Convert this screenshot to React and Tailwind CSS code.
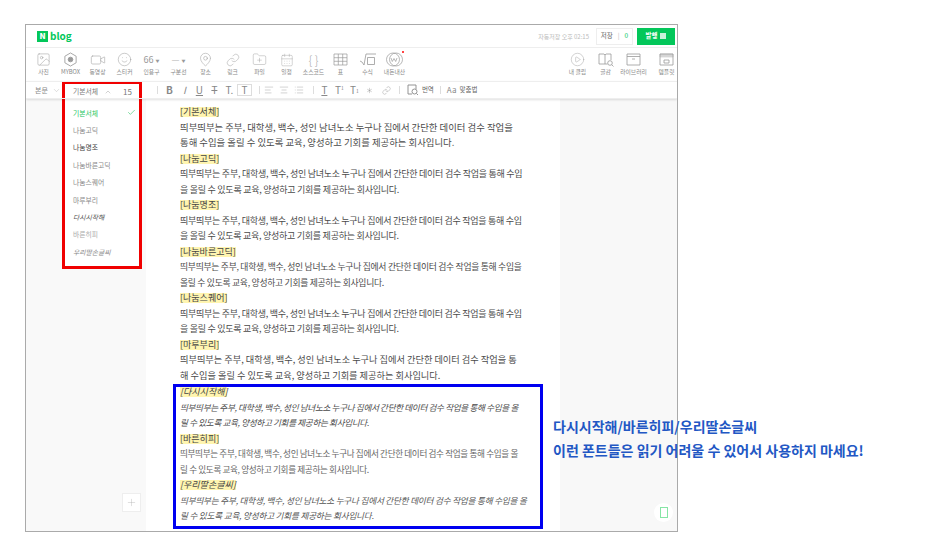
import {
  AlignCenter,
  AlignLeft,
  Asterisk,
  CalendarDays,
  Check,
  ChevronDown,
  ChevronUp,
  CirclePlay,
  FolderPlus,
  Image,
  Link,
  List,
  MapPin,
  Plus,
  Smile,
  Video,
} from "lucide-react";

const sans = "font-['Noto_Sans_CJK_KR','Noto_Sans',sans-serif]";

const Mybox = () => (
  <svg width="15" height="15" viewBox="0 0 16 16" fill="none" stroke="currentColor" strokeWidth="0.9">
    <path d="M8 1l6 3.500v7L8 15l-6-3.500v-7z" />
    <circle cx="8" cy="8" r="2.500" fill="currentColor" />
  </svg>
);

const TableIcon = () => (
  <svg width="15" height="13" viewBox="0 0 15 13" fill="none" stroke="currentColor" strokeWidth="0.7">
    <path d="M1 1h13v11H1zM1 4.700h13M1 8.300h13M5.300 1v11M9.700 1v11" />
  </svg>
);

const Formula = () => (
  <svg width="17" height="13" viewBox="0 0 17 13" fill="none" stroke="currentColor" strokeWidth="0.8">
    <path d="M1 8l2 1 2 3 2-11h10M8.500 4.500h7v7h-7z" />
  </svg>
);

const Review = () => (
  <svg width="19" height="15" viewBox="0 0 19 15" fill="none" stroke="currentColor" strokeWidth="0.7">
    <circle cx="8" cy="7.500" r="6.500" />
    <circle cx="11" cy="7.500" r="6.500" />
    <path d="M6 6l1.300 3.500L9 6.500l1.700 3L12 6" />
  </svg>
);

const BookSearch = () => (
  <svg width="16" height="14" viewBox="0 0 16 14" fill="none" stroke="currentColor" strokeWidth="0.8">
    <path d="M7 2L6 1H1v10h6zM7 2l1-1h5v6M7 11h2.500" />
    <circle cx="12" cy="10" r="2.300" />
    <path d="M13.700 11.700L15.500 13.500" />
  </svg>
);

const LibraryIcon = () => (
  <svg width="15" height="13" viewBox="0 0 15 13" fill="none" stroke="currentColor" strokeWidth="0.8">
    <path d="M1 1h13v11H1zM1 3.500h13M6 6h3" />
  </svg>
);

const TemplateIcon = () => (
  <svg width="15" height="13" viewBox="0 0 15 13" fill="none" stroke="currentColor" strokeWidth="0.8">
    <path d="M1 1h13v11H1z" />
    <path d="M1 1h13v3H1z" fill="currentColor" opacity="0.4" />
    <path d="M5 7h5v3H5z" />
  </svg>
);

const Translate = () => (
  <svg width="12" height="12" viewBox="0 0 12 12" fill="none" stroke="currentColor" strokeWidth="0.9">
    <path d="M1 1h8v4M1 1v9h4" />
    <circle cx="7.500" cy="7.500" r="2.500" />
    <path d="M9.500 9.500L11 11" />
  </svg>
);

const leftTools = [
  { label: "사진", icon: <Image size={15} strokeWidth={0.8} /> },
  { label: "MYBOX", icon: <Mybox /> },
  { label: "동영상", icon: <Video size={16} strokeWidth={0.8} /> },
  { label: "스티커", icon: <Smile size={15} strokeWidth={0.8} /> },
  { label: "인용구", icon: <span className="text-[9px] leading-none">66 <span className="text-[4px] align-middle">▼</span></span> },
  { label: "구분선", icon: <span className="text-[9px] font-light leading-none">— <span className="text-[4px] align-middle">▼</span></span> },
  { label: "장소", icon: <MapPin size={15} strokeWidth={0.8} /> },
  { label: "링크", icon: <Link size={14} strokeWidth={0.8} /> },
  { label: "파일", icon: <FolderPlus size={15} strokeWidth={0.7} /> },
  { label: "일정", icon: <CalendarDays size={14} strokeWidth={0.7} /> },
  { label: "소스코드", icon: <span className="text-[12px] font-light leading-none text-[#aaa]">{"{ }"}</span> },
  { label: "표", icon: <TableIcon /> },
  { label: "수식", icon: <Formula /> },
  { label: "내돈내산", icon: <Review />, dot: true },
];

const rightTools = [
  { label: "내 클립", icon: <CirclePlay size={15} strokeWidth={0.7} /> },
  { label: "글감", icon: <BookSearch /> },
  { label: "라이브러리", icon: <LibraryIcon /> },
  { label: "템플릿", icon: <TemplateIcon />, cls: "ml-[5px]" },
];

const fonts = [
  { name: "기본서체", active: true },
  { name: "나눔고딕" },
  { name: "나눔명조", cls: "text-[#444]" },
  { name: "나눔바른고딕" },
  { name: "나눔스퀘어" },
  { name: "마루부리" },
  { name: "다시시작해", cls: "italic text-[#555]" },
  { name: "바른히피", cls: "text-[#aaa]" },
  { name: "우리딸손글씨", cls: "italic text-[#888]" },
];

const sections = [
  { title: "[기본서체]", size: "text-[9.400px]", lines: ["띄부띄부는 주부, 대학생, 백수, 성인 남녀노소 누구나 집에서 간단한 데이터 검수 작업을", "통해 수입을 올릴 수 있도록 교육, 양성하고 기회를 제공하는 회사입니다."] },
  { title: "[나눔고딕]", size: "text-[9px] tracking-[-0.26px]", lines: ["띄부띄부는 주부, 대학생, 백수, 성인 남녀노소 누구나 집에서 간단한 데이터 검수 작업을 통해 수입", "을 올릴 수 있도록 교육, 양성하고 기회를 제공하는 회사입니다."] },
  { title: "[나눔명조]", size: "text-[9px] tracking-[-0.27px]", lines: ["띄부띄부는 주부, 대학생, 백수, 성인 남녀노소 누구나 집에서 간단한 데이터 검수 작업을 통해 수입", "을 올릴 수 있도록 교육, 양성하고 기회를 제공하는 회사입니다."] },
  { title: "[나눔바른고딕]", size: "text-[8.800px] tracking-[-0.27px]", lines: ["띄부띄부는 주부, 대학생, 백수, 성인 남녀노소 누구나 집에서 간단한 데이터 검수 작업을 통해 수입을", "올릴 수 있도록 교육, 양성하고 기회를 제공하는 회사입니다."] },
  { title: "[나눔스퀘어]", size: "text-[9px] tracking-[-0.27px]", lines: ["띄부띄부는 주부, 대학생, 백수, 성인 남녀노소 누구나 집에서 간단한 데이터 검수 작업을 통해 수입", "을 올릴 수 있도록 교육, 양성하고 기회를 제공하는 회사입니다."] },
  { title: "[마루부리]", size: "text-[9.200px]", lines: ["띄부띄부는 주부, 대학생, 백수, 성인 남녀노소 누구나 집에서 간단한 데이터 검수 작업을 통", "해 수입을 올릴 수 있도록 교육, 양성하고 기회를 제공하는 회사입니다."] },
];

const handSections = [
  { title: "[다시시작해]", size: "text-[8.600px] tracking-[-0.35px] italic", lines: ["띄부띄부는 주부, 대학생, 백수, 성인 남녀노소 누구나 집에서 간단한 데이터 검수 작업을 통해 수입을 올", "릴 수 있도록 교육, 양성하고 기회를 제공하는 회사입니다."] },
  { title: "[바른히피]", size: "text-[8.600px] tracking-[-0.35px] text-[#666]", lines: ["띄부띄부는 주부, 대학생, 백수, 성인 남녀노소 누구나 집에서 간단한 데이터 검수 작업을 통해 수입을 올", "릴 수 있도록 교육, 양성하고 기회를 제공하는 회사입니다."] },
  { title: "[우리딸손글씨]", size: "text-[8.600px] tracking-[-0.2px] italic text-[#555]", lines: ["띄부띄부는 주부, 대학생, 백수, 성인 남녀노소 누구나 집에서 간단한 데이터 검수 작업을 통해 수입을 올", "릴 수 있도록 교육, 양성하고 기회를 제공하는 회사입니다."] },
];

const Tool = ({ tool }) => (
  <div className={`relative flex w-[27px] flex-col items-center ${tool.cls || ""}`}>
    <div className="flex h-[17px] items-center justify-center text-[#999]">{tool.icon}</div>
    {tool.dot && <span className="absolute right-[4px] top-0 h-[2px] w-[2px] bg-[#f44]" />}
    <span className="whitespace-nowrap text-[5.800px] leading-[8px] text-[#888]">{tool.label}</span>
  </div>
);

const Fmt = ({ children, className = "" }) => (
  <span className={`flex h-[12px] w-[15px] items-center justify-center text-[10px] leading-none text-[#888] ${className}`}>
    {children}
  </span>
);

const Divider = ({ className = "" }) => <span className={`h-[8px] w-px bg-[#ddd] ${className}`} />;

const Section = ({ section }) => (
  <div className={`${section.size} leading-[15.500px] whitespace-nowrap text-[#4a4a4a]`}>
    <div>
      <span className="inline-block bg-[#fff5b0] text-[9px] leading-[10px] tracking-normal text-[#444]">{section.title}</span>
    </div>
    {section.lines.map((line) => (
      <div key={line}>{line}</div>
    ))}
  </div>
);

const FontMenu = () => (
  <div className="absolute left-[36px] top-[56px] h-[188px] w-[80px] border-[3px] border-[#f00000] bg-white">
    <div className="flex h-[15px] items-center pl-[8px] text-[6.800px] text-[#777]">
      <span>기본서체</span>
      <ChevronUp className="ml-[6px]" size={8} strokeWidth={1} />
      <span className="ml-[11px] text-[8px]">15</span>
    </div>
    <ul className="mt-[5px]">
      {fonts.map((font) => (
        <li
          key={font.name}
          className={`flex h-[17.400px] items-center justify-between pl-[8px] pr-[3px] text-[6.800px] ${
            font.active ? "text-[#22c55e]" : font.cls || "text-[#888]"
          }`}
        >
          {font.name}
          {font.active && <Check size={9} strokeWidth={1.500} />}
        </li>
      ))}
    </ul>
  </div>
);

export default function App() {
  return (
    <div className={`relative h-[553px] w-[934px] overflow-hidden bg-white pl-[25px] pt-[24px] ${sans}`}>
      <div className="relative flex h-[508px] w-[653px] flex-col overflow-hidden border border-[#aaa] bg-white">
        <header className="flex h-[23px] shrink-0 items-center border-b border-[#eee] pl-[11px] pr-[2px]">
          <span className="flex h-[11px] w-[11px] items-center justify-center bg-[#03c75a] text-[8px] font-black leading-none text-white">N</span>
          <span className="ml-[2px] text-[10px] font-bold leading-none text-[#03c75a]">blog</span>
          <span className="ml-auto text-[6px] text-[#bbb]">자동저장 오후 02:15</span>
          <button className="ml-[7px] flex h-[17px] w-[37px] items-center justify-center gap-[5px] border border-[#eee] text-[6.500px] text-[#666]">
            저장 <span className="text-[#bbb]">|</span> <span className="text-[#03c75a]">0</span>
          </button>
          <button className="ml-[4px] flex h-[17px] w-[38px] items-center justify-center gap-[3px] bg-[#03c75a] text-[6.500px] font-bold text-white">
            발행 <span className="h-[6px] w-[6px] bg-[#c9f2da]" />
          </button>
        </header>

        <div className="flex h-[33px] shrink-0 items-start justify-between pl-[4px] pt-[3px]">
          <div className="flex">
            {leftTools.map((tool) => (
              <Tool key={tool.label} tool={tool} />
            ))}
          </div>
          <div className="-mr-[3px] flex gap-[1px]">
            {rightTools.map((tool) => (
              <Tool key={tool.label} tool={tool} />
            ))}
          </div>
        </div>

        <div className="relative z-10 flex h-[18px] shrink-0 items-center border-y border-[#eee] pl-[9px] shadow-[0_1px_2px_rgba(0,0,0,0.12)]">
          <span className="text-[7px] text-[#888]">본문</span>
          <ChevronDown className="ml-[4px] text-[#aaa]" size={9} strokeWidth={1} />
          <Divider className="ml-[96px]" />
          <div className="ml-[4px] flex">
            <Fmt className="font-bold text-[#555]">B</Fmt>
            <Fmt className="italic">I</Fmt>
            <Fmt className="underline">U</Fmt>
            <Fmt className="line-through">T</Fmt>
            <Fmt>T.</Fmt>
            <Fmt className="border border-[#ddd]">T</Fmt>
          </div>
          <Divider className="ml-[7px]" />
          <div className="ml-[2px] flex">
            <Fmt><AlignLeft size={10} strokeWidth={0.9} /></Fmt>
            <Fmt><AlignCenter size={10} strokeWidth={0.9} /></Fmt>
            <Fmt><List size={10} strokeWidth={0.9} /></Fmt>
          </div>
          <Divider className="ml-[6px]" />
          <div className="ml-[3px] flex">
            <Fmt className="underline">T</Fmt>
            <Fmt>T<sup className="text-[5px]">1</sup></Fmt>
            <Fmt>T<sub className="text-[5px]">1</sub></Fmt>
            <Fmt><Asterisk size={9} strokeWidth={1} /></Fmt>
            <Fmt className="ml-[2px]"><Link size={9} strokeWidth={1} /></Fmt>
          </div>
          <Divider className="ml-[5px]" />
          <span className="ml-[7px] text-[#888]"><Translate /></span>
          <span className="ml-[3px] text-[6.500px] text-[#666]">번역</span>
          <Divider className="ml-[6px]" />
          <span className="ml-[6px] text-[8px] leading-none text-[#888]">Aa</span>
          <span className="ml-[3px] text-[6.500px] text-[#666]">맞춤법</span>
        </div>

        <div className="flex min-h-0 flex-1">
          <aside className="relative w-[120px] shrink-0 bg-[#f9f9f9]">
            <button className="absolute bottom-[19px] right-[5px] flex h-[19px] w-[19px] items-center justify-center border border-[#eee] bg-white text-[#aaa]">
              <Plus size={11} strokeWidth={0.8} />
            </button>
          </aside>
          <main className="w-[414px] shrink-0 overflow-hidden pl-[34px] pt-[5px]">
            {sections.map((section) => (
              <Section key={section.title} section={section} />
            ))}
            <div className="-ml-[7px] mt-[1px] h-[145px] w-[370px] border-[3px] border-[#0000f0] pl-[4px]">
              <div className="-mt-[3px]">
                {handSections.map((section) => (
                  <Section key={section.title} section={section} />
                ))}
              </div>
            </div>
          </main>
          <aside className="relative flex-1 bg-[#f8f8f8]">
            <button className="absolute bottom-[9px] right-[4px] flex h-[19px] w-[19px] items-center justify-center rounded-full bg-white">
              <span className="h-[11px] w-[8px] border border-[#86e5a5]" />
            </button>
          </aside>
        </div>

        <FontMenu />
      </div>

      <p className="absolute left-[553px] top-[414px] whitespace-nowrap text-[14px] font-bold leading-[24px] text-[#2257c4]">
        다시시작해/바른히피/우리딸손글씨
        <br />
        이런 폰트들은 읽기 어려울 수 있어서 사용하지 마세요!
      </p>
    </div>
  );
}
